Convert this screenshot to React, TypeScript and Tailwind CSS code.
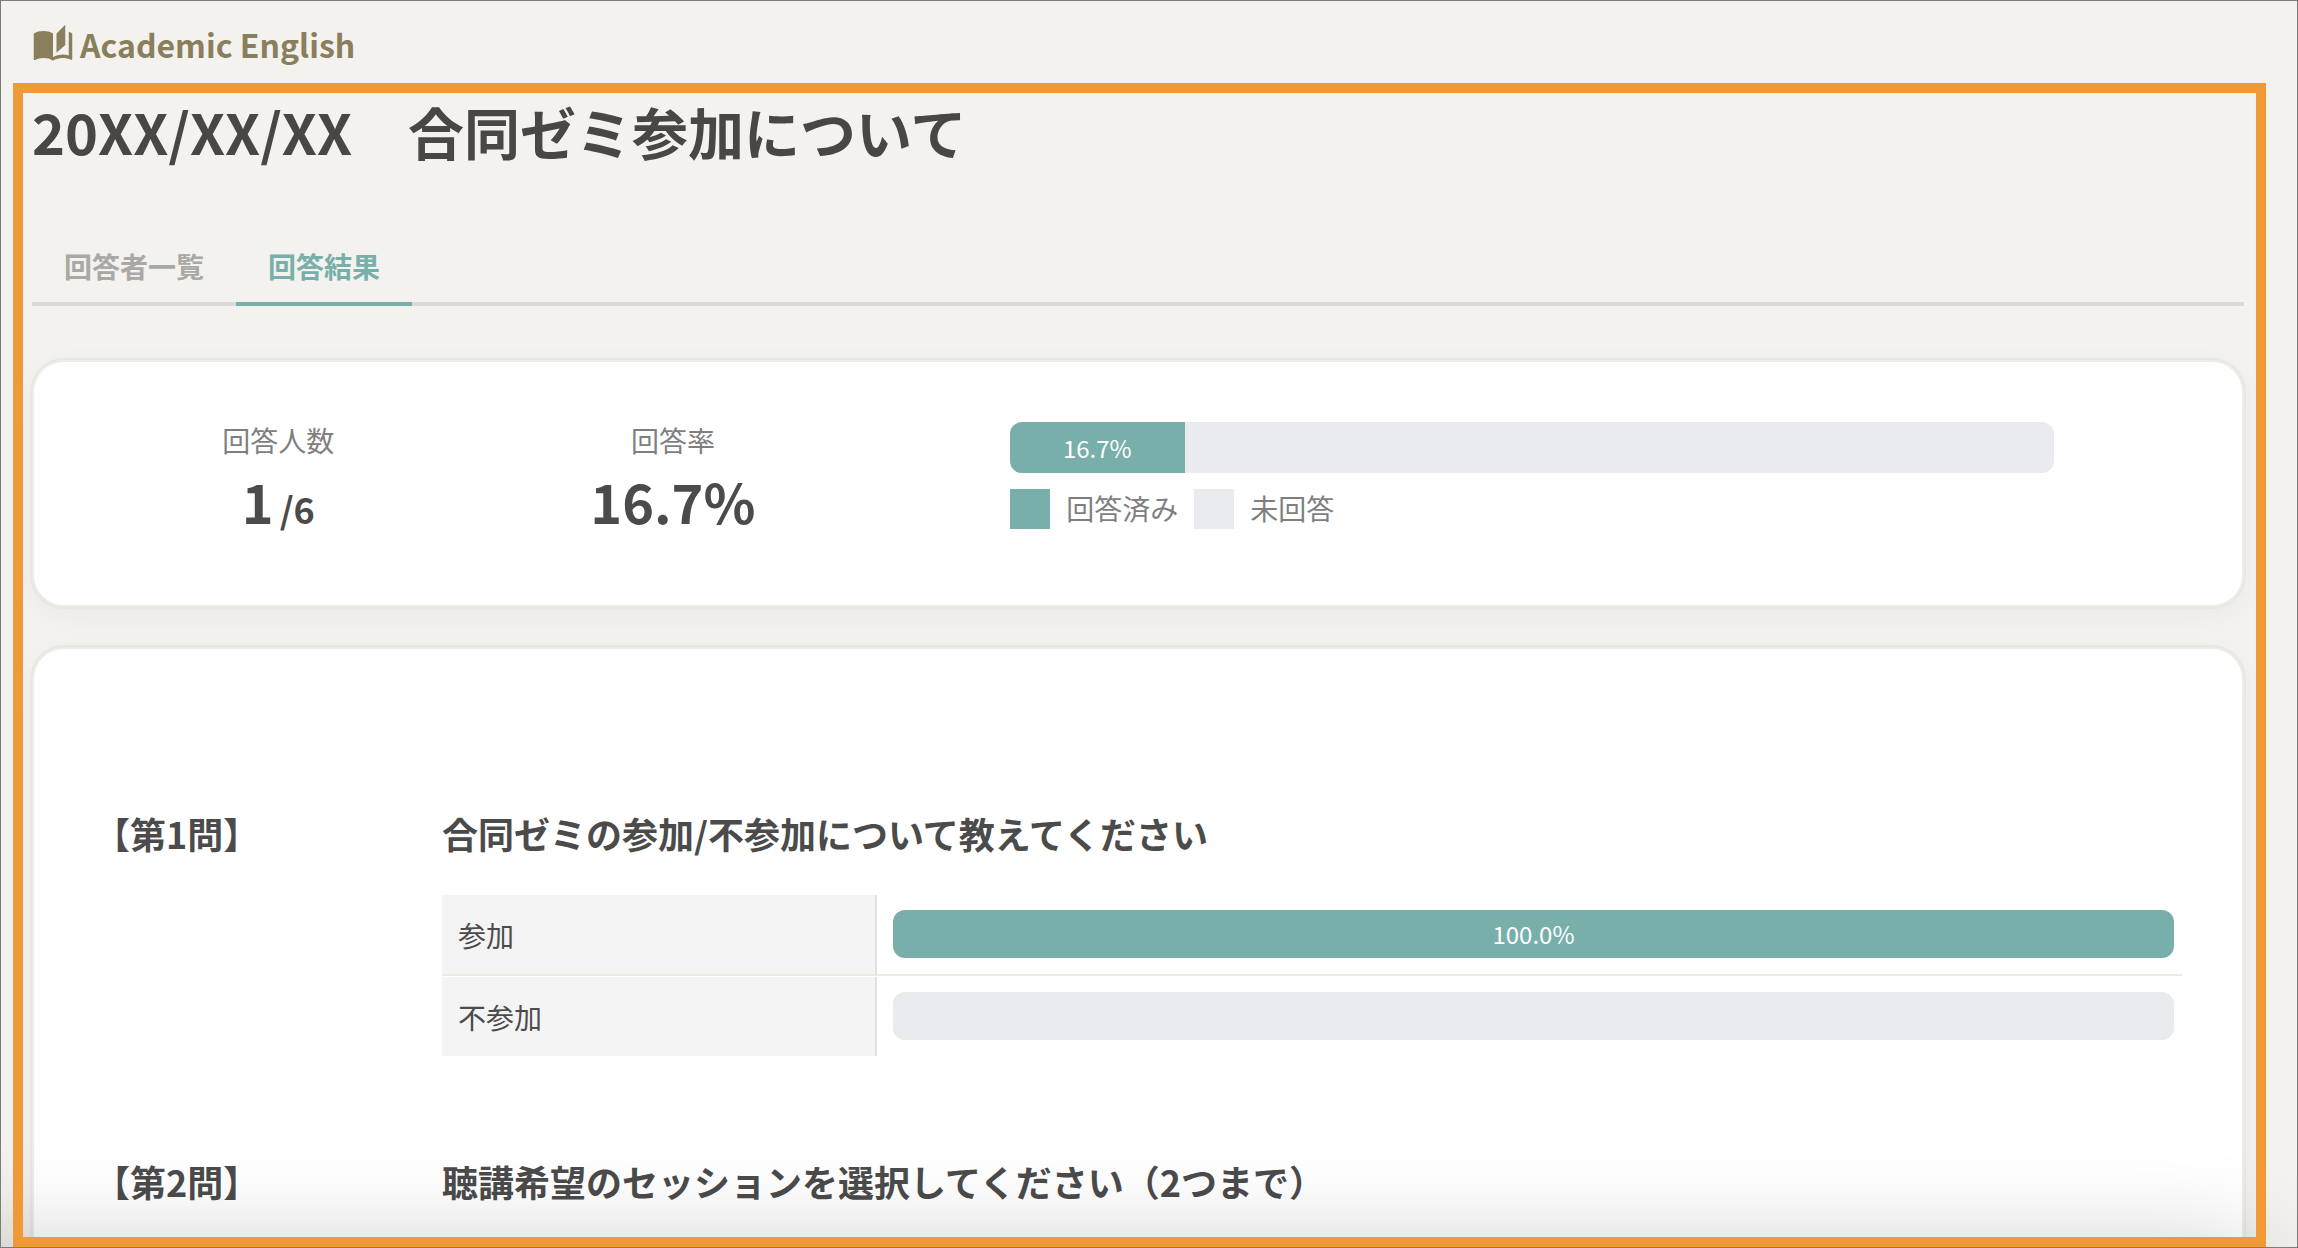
import { MdAutoStories } from "react-icons/md";

const responded = 16.7;

const questions = [
  {
    label: "【第1問】",
    title: "合同ゼミの参加/不参加について教えてください",
    options: [
      { name: "参加", percent: 100 },
      { name: "不参加", percent: 0 },
    ],
  },
  {
    label: "【第2問】",
    title: "聴講希望のセッションを選択してください（2つまで）",
    options: [],
  },
];

function Bar({ percent, className }: { percent: number; className: string }) {
  return (
    <div className={`flex overflow-hidden rounded-xl bg-[#eaebef] ${className}`}>
      {percent > 0 && (
        <div
          className="flex items-center justify-center bg-[#78afaa] text-2xl leading-6 text-white"
          style={{ width: `${percent}%` }}
        >
          {percent.toFixed(1)}%
        </div>
      )}
    </div>
  );
}

function Card({ className, children }: { className: string; children: React.ReactNode }) {
  return (
    <section
      className={`rounded-[32px] border-2 border-[#edede8] bg-white shadow-[0_0_0_2px_#e8e7e3,0_8px_32px_rgba(0,0,0,0.04)] ${className}`}
    >
      {children}
    </section>
  );
}

export default function App() {
  return (
    <div className="relative flex h-screen flex-col overflow-hidden border border-[#7c7a7b] bg-[#f3f2ee] pr-[31px] pl-3 font-['Noto_Sans_CJK_JP',sans-serif] text-[#4b4b4b]">
      <header className="flex h-[82px] shrink-0 items-center pt-1 pl-[19px]">
        <a href="#course" className="flex items-center gap-1.5 text-[32px] leading-10 font-bold text-[#8a7f5c]">
          <MdAutoStories className="size-[42px]" />
          Academic English
        </a>
      </header>

      <main className="relative flex min-h-0 grow flex-col pt-[10px] pr-[22px] pl-[19px]">
        <div className="pointer-events-none absolute inset-0 z-20 border-[10px] border-[#f09937]" />
        <h1 className="mt-1 text-[56px] leading-[68px] font-bold text-[#484745]">
          20XX/XX/XX　合同ゼミ参加について
        </h1>

        <nav className="mt-[69px] flex shrink-0 border-b-4 border-[#dbdad6] text-[28px] leading-10 font-bold" role="tablist">
          <button type="button" role="tab" aria-selected="false" className="-mb-1 border-b-4 border-transparent px-8 pt-3 pb-4 text-[#a9a8a6]">
            回答者一覧
          </button>
          <button type="button" role="tab" aria-selected="true" className="-mb-1 border-b-4 border-[#78afaa] px-8 pt-3 pb-4 text-[#78afaa]">
            回答結果
          </button>
        </nav>

        <Card className="mt-[54px] grid h-[247px] shrink-0 grid-cols-5 pt-[60px] pr-[188px] pl-[47px]">
          <div className="flex flex-col items-center">
            <span className="text-[28px] leading-9 text-[#7f7f7f]">回答人数</span>
            <span className="flex items-baseline gap-1.5 text-[54px] leading-[86px] font-bold">
              1<span className="text-4xl">/6</span>
            </span>
          </div>
          <div className="flex flex-col items-center">
            <span className="text-[28px] leading-9 text-[#7f7f7f]">回答率</span>
            <span className="text-[54px] leading-[86px] font-bold">{responded}%</span>
          </div>
          <div className="col-span-3 pl-[140px]">
            <Bar percent={responded} className="h-[51px]" />
            <ul className="mt-4 flex gap-4 text-[28px] leading-[38px] text-[#7f7f7f]">
              <li className="flex gap-4">
                <span className="size-10 bg-[#78afaa]" />
                回答済み
              </li>
              <li className="flex gap-4">
                <span className="size-10 bg-[#eaebef]" />
                未回答
              </li>
            </ul>
          </div>
        </Card>

        <Card className="mt-10 flex h-[900px] shrink-0 flex-col gap-[98px] pt-[158px] pr-[60px] pl-[60px]">
          {questions.map((question) => (
            <div key={question.label} className="flex">
              <h2 className="w-[348px] shrink-0 text-4xl leading-[52px] font-bold">{question.label}</h2>
              <div className="grow">
                <h3 className="text-4xl leading-[52px] font-bold">{question.title}</h3>
                {question.options.length > 0 && (
                  <table className="mt-[35px] w-full table-fixed border-separate border-spacing-x-0 border-spacing-y-px text-[28px] leading-10">
                    <tbody>
                      {question.options.map((option) => (
                        <tr key={option.name} className="group">
                          <th
                            scope="row"
                            className="w-1/4 border-r-2 border-b-2 border-r-[#e3e3de] border-b-[#ecece6] bg-[#f4f4f4] px-4 text-left font-normal group-last:border-b-0"
                          >
                            {option.name}
                          </th>
                          <td className="border-b-2 border-[#ecece6] pt-[15px] pr-2 pb-4 pl-4 group-last:border-b-0">
                            <Bar percent={option.percent} className="h-12" />
                          </td>
                        </tr>
                      ))}
                    </tbody>
                  </table>
                )}
              </div>
            </div>
          ))}
        </Card>
      </main>

      <div className="pointer-events-none absolute top-full right-10 -left-40 z-10 h-40 shadow-[0_0_100px_rgba(0,0,0,0.2)]" />
    </div>
  );
}
